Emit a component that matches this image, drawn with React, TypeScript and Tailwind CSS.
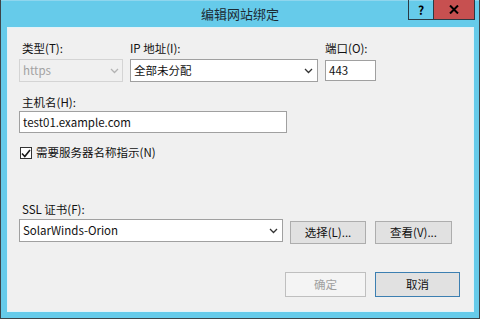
import React from 'react';

const font = { fontFamily: '"Noto Sans CJK SC", "Noto Sans", sans-serif' };

const Chevron: React.FC<{ color?: string }> = ({ color = '#333' }) => (
  <svg width="9" height="6" viewBox="0 0 9 6" className="shrink-0">
    <polyline points="1,1 4.5,4.5 8,1" fill="none" stroke={color} strokeWidth="1.3" />
  </svg>
);

const Button: React.FC<{ label: string; className?: string; disabled?: boolean; primary?: boolean }> = ({
  label,
  className = '',
  disabled,
  primary,
}) => (
  <div
    className={`flex items-center justify-center pt-[1px] text-[11.5px] ${
      disabled
        ? 'bg-[#f4f4f4] border border-[#bfbfbf] text-[#a0a0a0]'
        : primary
        ? 'bg-[#e1e1e1] border border-[#3c7fb1] text-[#111]'
        : 'bg-[#e1e1e1] border border-[#adadad] text-[#111]'
    } ${className}`}
  >
    {label}
  </div>
);

export default function App() {
  return (
    <div
      className="w-[480px] h-[319px] bg-[#66cbea] border-l border-r border-b border-[#3d4449] flex flex-col overflow-hidden"
      style={font}
    >
      {/* title bar */}
      <div className="relative h-[27px] shrink-0 border-t border-[#8fd6ee]">
        <div className="text-center text-[13px] leading-[26px] text-[#1b2a33]">编辑网站绑定</div>
        <div className="absolute top-[-1px] right-[4px] flex h-[20px]">
          <div className="w-[26px] border border-t-0 border-[#2b3a44] flex items-center justify-center text-[12px] font-bold text-black">
            ?
          </div>
          <div className="w-[41px] bg-[#c75050] border border-t-0 border-l-0 border-[#2b3a44] flex items-center justify-center">
            <svg width="10" height="9" viewBox="0 0 10 9">
              <path d="M1 0.5 L9 8.5 M9 0.5 L1 8.5" stroke="#000" strokeWidth="2" />
            </svg>
          </div>
        </div>
      </div>

      {/* client area */}
      <div className="ml-[6px] mr-[5px] h-[285px] bg-[#f0f0f0] border border-[#e4f2f8] pl-[11px] pt-[12px] text-[11.5px] text-[#111]">
        {/* row 1 */}
        <div className="flex gap-[7px]">
          <div className="w-[104px] flex flex-col">
            <div className="leading-[16px] pl-[3px]">类型(T):</div>
            <div className="mt-[3px] h-[23px] border border-[#d4d4d4] bg-[#f0f0f0] flex items-center justify-between px-[3px] pt-[1px] text-[#a2a2a2]">
              <span>https</span>
              <Chevron color="#b3b3b3" />
            </div>
          </div>
          <div className="w-[188px] flex flex-col">
            <div className="leading-[16px]">IP 地址(I):</div>
            <div className="mt-[3px] h-[23px] border border-[#a0a0a0] bg-white flex items-center justify-between pl-[3px] pr-[4px] pt-[1px]">
              <span>全部未分配</span>
              <Chevron />
            </div>
          </div>
          <div className="w-[51px] flex flex-col">
            <div className="leading-[16px]">端口(O):</div>
            <div className="mt-[4px] h-[21px] border border-[#a0a0a0] bg-white flex items-center pl-[3px] pt-[1px]">443</div>
          </div>
        </div>

        {/* host */}
        <div className="mt-[12px] leading-[16px] pl-[3px]">主机名(H):</div>
        <div className="mt-[1px] w-[268px] h-[22px] border border-[#a0a0a0] bg-white flex items-center pl-[3px] pt-[2px]">
          test01.example.com
        </div>

        {/* checkbox */}
        <div className="mt-[12px] flex items-center gap-[4px] pl-[1px] h-[16px]">
          <div className="w-[12px] h-[12px] border border-[#333] bg-white flex items-center justify-center">
            <svg width="10" height="9" viewBox="0 0 10 9">
              <polyline points="1,4.5 3.8,7.5 9,1" fill="none" stroke="#1a1a1a" strokeWidth="1.6" />
            </svg>
          </div>
          <span>需要服务器名称指示(N)</span>
        </div>

        {/* ssl */}
        <div className="mt-[40px] leading-[16px] pl-[3px]">SSL 证书(F):</div>
        <div className="mt-[2px] flex items-start">
          <div className="w-[264px] h-[23px] border border-[#a0a0a0] bg-white flex items-center justify-between pl-[3px] pr-[4px] pt-[1px]">
            <span>SolarWinds-Orion</span>
            <Chevron />
          </div>
          <Button label="选择(L)..." className="ml-[7px] mt-[2px] w-[76px] h-[23px]" />
          <Button label="查看(V)..." className="ml-[9px] mt-[2px] w-[77px] h-[23px]" />
        </div>

        {/* footer */}
        <div className="mt-[28px] flex justify-end pr-[13px] gap-[9px]">
          <Button label="确定" disabled className="w-[81px] h-[25px]" />
          <Button label="取消" primary className="w-[85px] h-[25px]" />
        </div>
      </div>
    </div>
  );
}
